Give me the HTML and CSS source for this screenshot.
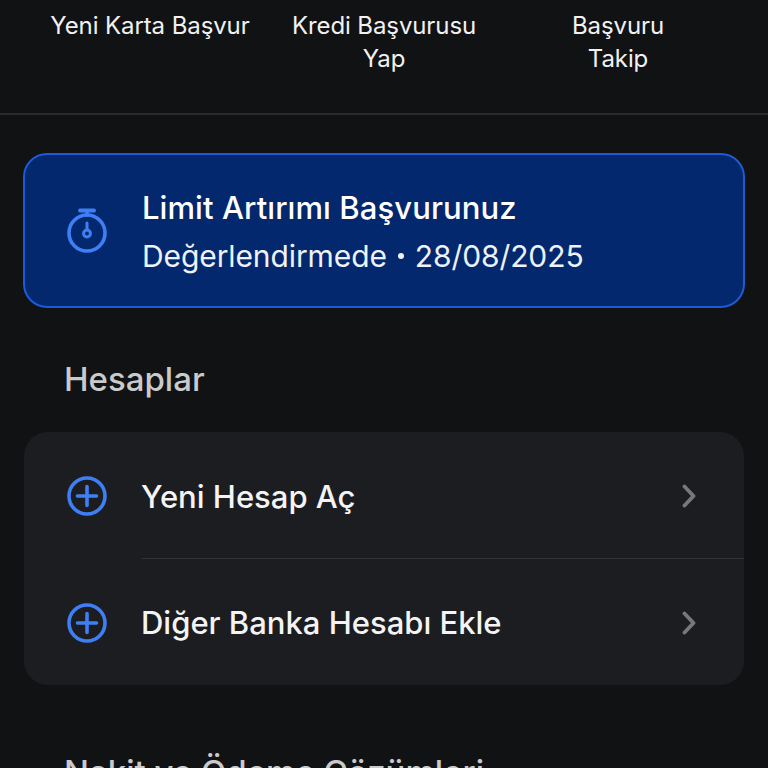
FILE: index.html
```html
<!DOCTYPE html>
<html lang="tr">
<head>
<meta charset="utf-8">
<title>Başvurular</title>
<link rel="stylesheet" href="styles.css">
</head>
<body>
<main class="page">
  <nav class="actions">
    <div class="action">Yeni Karta Başvur</div>
    <div class="action">Kredi Başvurusu<br>Yap</div>
    <div class="action">Başvuru<br>Takip</div>
  </nav>
  <section class="banner">
    <svg class="icon" viewBox="0 0 40 46" width="40" height="46" fill="none" stroke="#3F7FF5" stroke-width="3.6" stroke-linecap="round">
      <path d="M13 2.5h14" stroke-width="4"/>
      <path d="M20 3v4"/>
      <circle cx="20" cy="25" r="18"/>
      <path d="M20 15v7" stroke-width="3"/>
      <circle cx="20" cy="25.5" r="3.4" stroke-width="3"/>
    </svg>
    <div class="banner-text">
      <div class="banner-title">Limit Artırımı Başvurunuz</div>
      <div class="banner-sub">Değerlendirmede<span class="dot"></span>28/08/2025</div>
    </div>
  </section>
  <h2 class="heading">Hesaplar</h2>
  <section class="card">
    <div class="row">
      <svg class="icon" viewBox="0 0 40 40" width="40" height="40" fill="none" stroke="#3F7FF5" stroke-width="3.6" stroke-linecap="round">
        <circle cx="20" cy="20" r="18"/>
        <path d="M20 10.5v19M10.5 20h19"/>
      </svg>
      <span class="row-label">Yeni Hesap Aç</span>
      <svg class="chev" viewBox="0 0 14 24" width="14" height="24" fill="none" stroke="#77787B" stroke-width="3.8" stroke-linecap="round" stroke-linejoin="round">
        <path d="M2.5 2.5 11.5 12 2.5 21.5"/>
      </svg>
    </div>
    <div class="row row-divided">
      <svg class="icon" viewBox="0 0 40 40" width="40" height="40" fill="none" stroke="#3F7FF5" stroke-width="3.6" stroke-linecap="round">
        <circle cx="20" cy="20" r="18"/>
        <path d="M20 10.5v19M10.5 20h19"/>
      </svg>
      <span class="row-label">Diğer Banka Hesabı Ekle</span>
      <svg class="chev" viewBox="0 0 14 24" width="14" height="24" fill="none" stroke="#77787B" stroke-width="3.8" stroke-linecap="round" stroke-linejoin="round">
        <path d="M2.5 2.5 11.5 12 2.5 21.5"/>
      </svg>
    </div>
  </section>
  <h2 class="heading heading-next">Nakit ve Ödeme Çözümleri</h2>
</main>
</body>
</html>
```
FILE: styles.css
```css
* { box-sizing: border-box; }
html, body { margin: 0; height: 768px; overflow: hidden; background: #111214; }
body { font-family: Inter, Lato, sans-serif; color: #fff; }
.page { height: 768px; overflow: hidden; padding: 0 23px; }
.actions {
  display: grid;
  grid-template-columns: repeat(3, 234px);
  justify-content: center;
  height: 115px;
  margin: 0 -23px;
  padding-top: 9px;
  border-bottom: 2px solid #2A2B2E;
}
.action { font-size: 24px; line-height: 33px; text-align: center; color: #F1F1F2; letter-spacing: -0.1px; }
.banner {
  display: flex;
  align-items: center;
  height: 155px;
  margin-top: 38px;
  padding-left: 42px;
  background: #03286E;
  border: 2px solid #1D5BD6;
  border-radius: 24px;
}
.icon { flex: none; }
.banner-text { margin-left: 35px; padding-top: 1px; }
.banner-title { font-size: 31px; line-height: 50px; font-weight: 500; color: #fff; letter-spacing: 0.08px; }
.banner-sub { font-size: 30px; line-height: 46px; color: #EEF2FA; letter-spacing: -0.1px; }
.dot { display: inline-block; width: 6px; height: 6px; margin: 0 11px; border-radius: 50%; background: #EEF2FA; vertical-align: 8px; }
.heading { margin: 51px 0 0 41px; font-size: 33px; line-height: 40px; font-weight: 500; color: #C9CACC; }
.card {
  margin: 33px 1px 0;
  height: 253px;
  background: #1C1D21;
  border-radius: 24px;
}
.row { display: flex; align-items: center; height: 126px; padding: 2px 48px 0 43px; position: relative; }
.row-divided { height: 127px; }
.row-divided::before {
  content: "";
  position: absolute;
  left: 118px;
  right: 0;
  top: 0;
  height: 1px;
  background: #323337;
}
.row-label { flex: 1; margin-left: 34px; font-size: 31px; font-weight: 500; color: #F4F4F5; }
.chev { flex: none; }
.heading-next { margin-top: 67px; }
```
